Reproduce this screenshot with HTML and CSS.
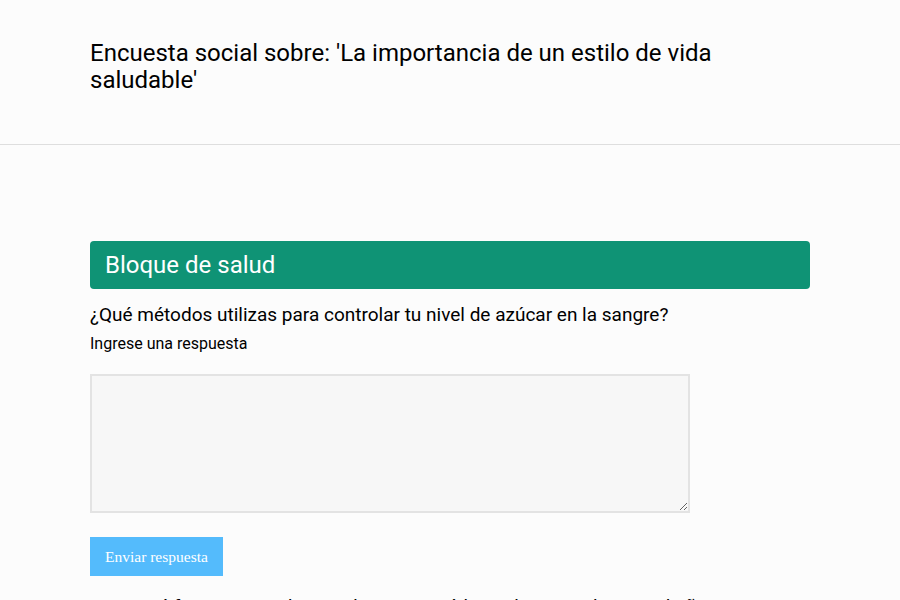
FILE: index.html
```html
<!DOCTYPE html>
<html lang="es">
<head>
<meta charset="utf-8">
<title>Encuesta</title>
<link rel="stylesheet" href="styles.css">
</head>
<body>
<header class="header">
  <h1 class="title">Encuesta social sobre: 'La importancia de un estilo de vida saludable'</h1>
</header>
<main class="main">
  <section class="block">
    <h2 class="block-title">Bloque de salud</h2>
    <form class="question">
      <p class="q-text">¿Qué métodos utilizas para controlar tu nivel de azúcar en la sangre?</p>
      <label class="q-label" for="a1">Ingrese una respuesta</label>
      <textarea id="a1" class="answer"></textarea>
      <button type="button" class="send">Enviar respuesta</button>
    </form>
    <form class="question">
      <p class="q-text">¿Con qué frecuencia te haces chequeos médicos de rutina durante el año?</p>
    </form>
  </section>
</main>
</body>
</html>
```
FILE: styles.css
```css
html, body {
  margin: 0;
  padding: 0;
  background: #fcfcfc;
  font-family: Roboto, "Noto Sans", sans-serif;
  color: #000;
}
.header {
  border-bottom: 1px solid #dedede;
  padding: 40px 90px 0;
  height: 145px;
  box-sizing: border-box;
}
.title {
  margin: 0;
  font-size: 24px;
  font-weight: 400;
  line-height: 27px;
  max-width: 640px;
}
.main {
  padding: 96px 90px 0;
}
.block {
  width: 720px;
}
.block-title {
  margin: 0;
  background: #0f9375;
  color: #fff;
  font-size: 24px;
  font-weight: 400;
  height: 48px;
  line-height: 48px;
  padding-left: 15px;
  border-radius: 4px;
}
.question {
  display: flex;
  flex-direction: column;
  align-items: flex-start;
}
.q-text {
  margin: 14px 0 0;
  font-size: 19px;
  line-height: 24px;
}
.q-label {
  font-size: 16px;
  line-height: 20px;
  margin-top: 7px;
}
.answer {
  margin-top: 20px;
  width: 600px;
  height: 139px;
  box-sizing: border-box;
  background: #f7f7f7;
  border: 2px solid #e3e3e3;
  padding: 4px;
  font-family: inherit;
}
.send {
  margin-top: 24px;
  background: #54bbfc;
  color: #fff;
  border: none;
  border-radius: 0;
  height: 39px;
  padding: 0 15px;
  font-family: "Liberation Serif", serif;
  font-size: 15.5px;
}
.question + .question .q-text {
  margin-top: 19px;
}
```
